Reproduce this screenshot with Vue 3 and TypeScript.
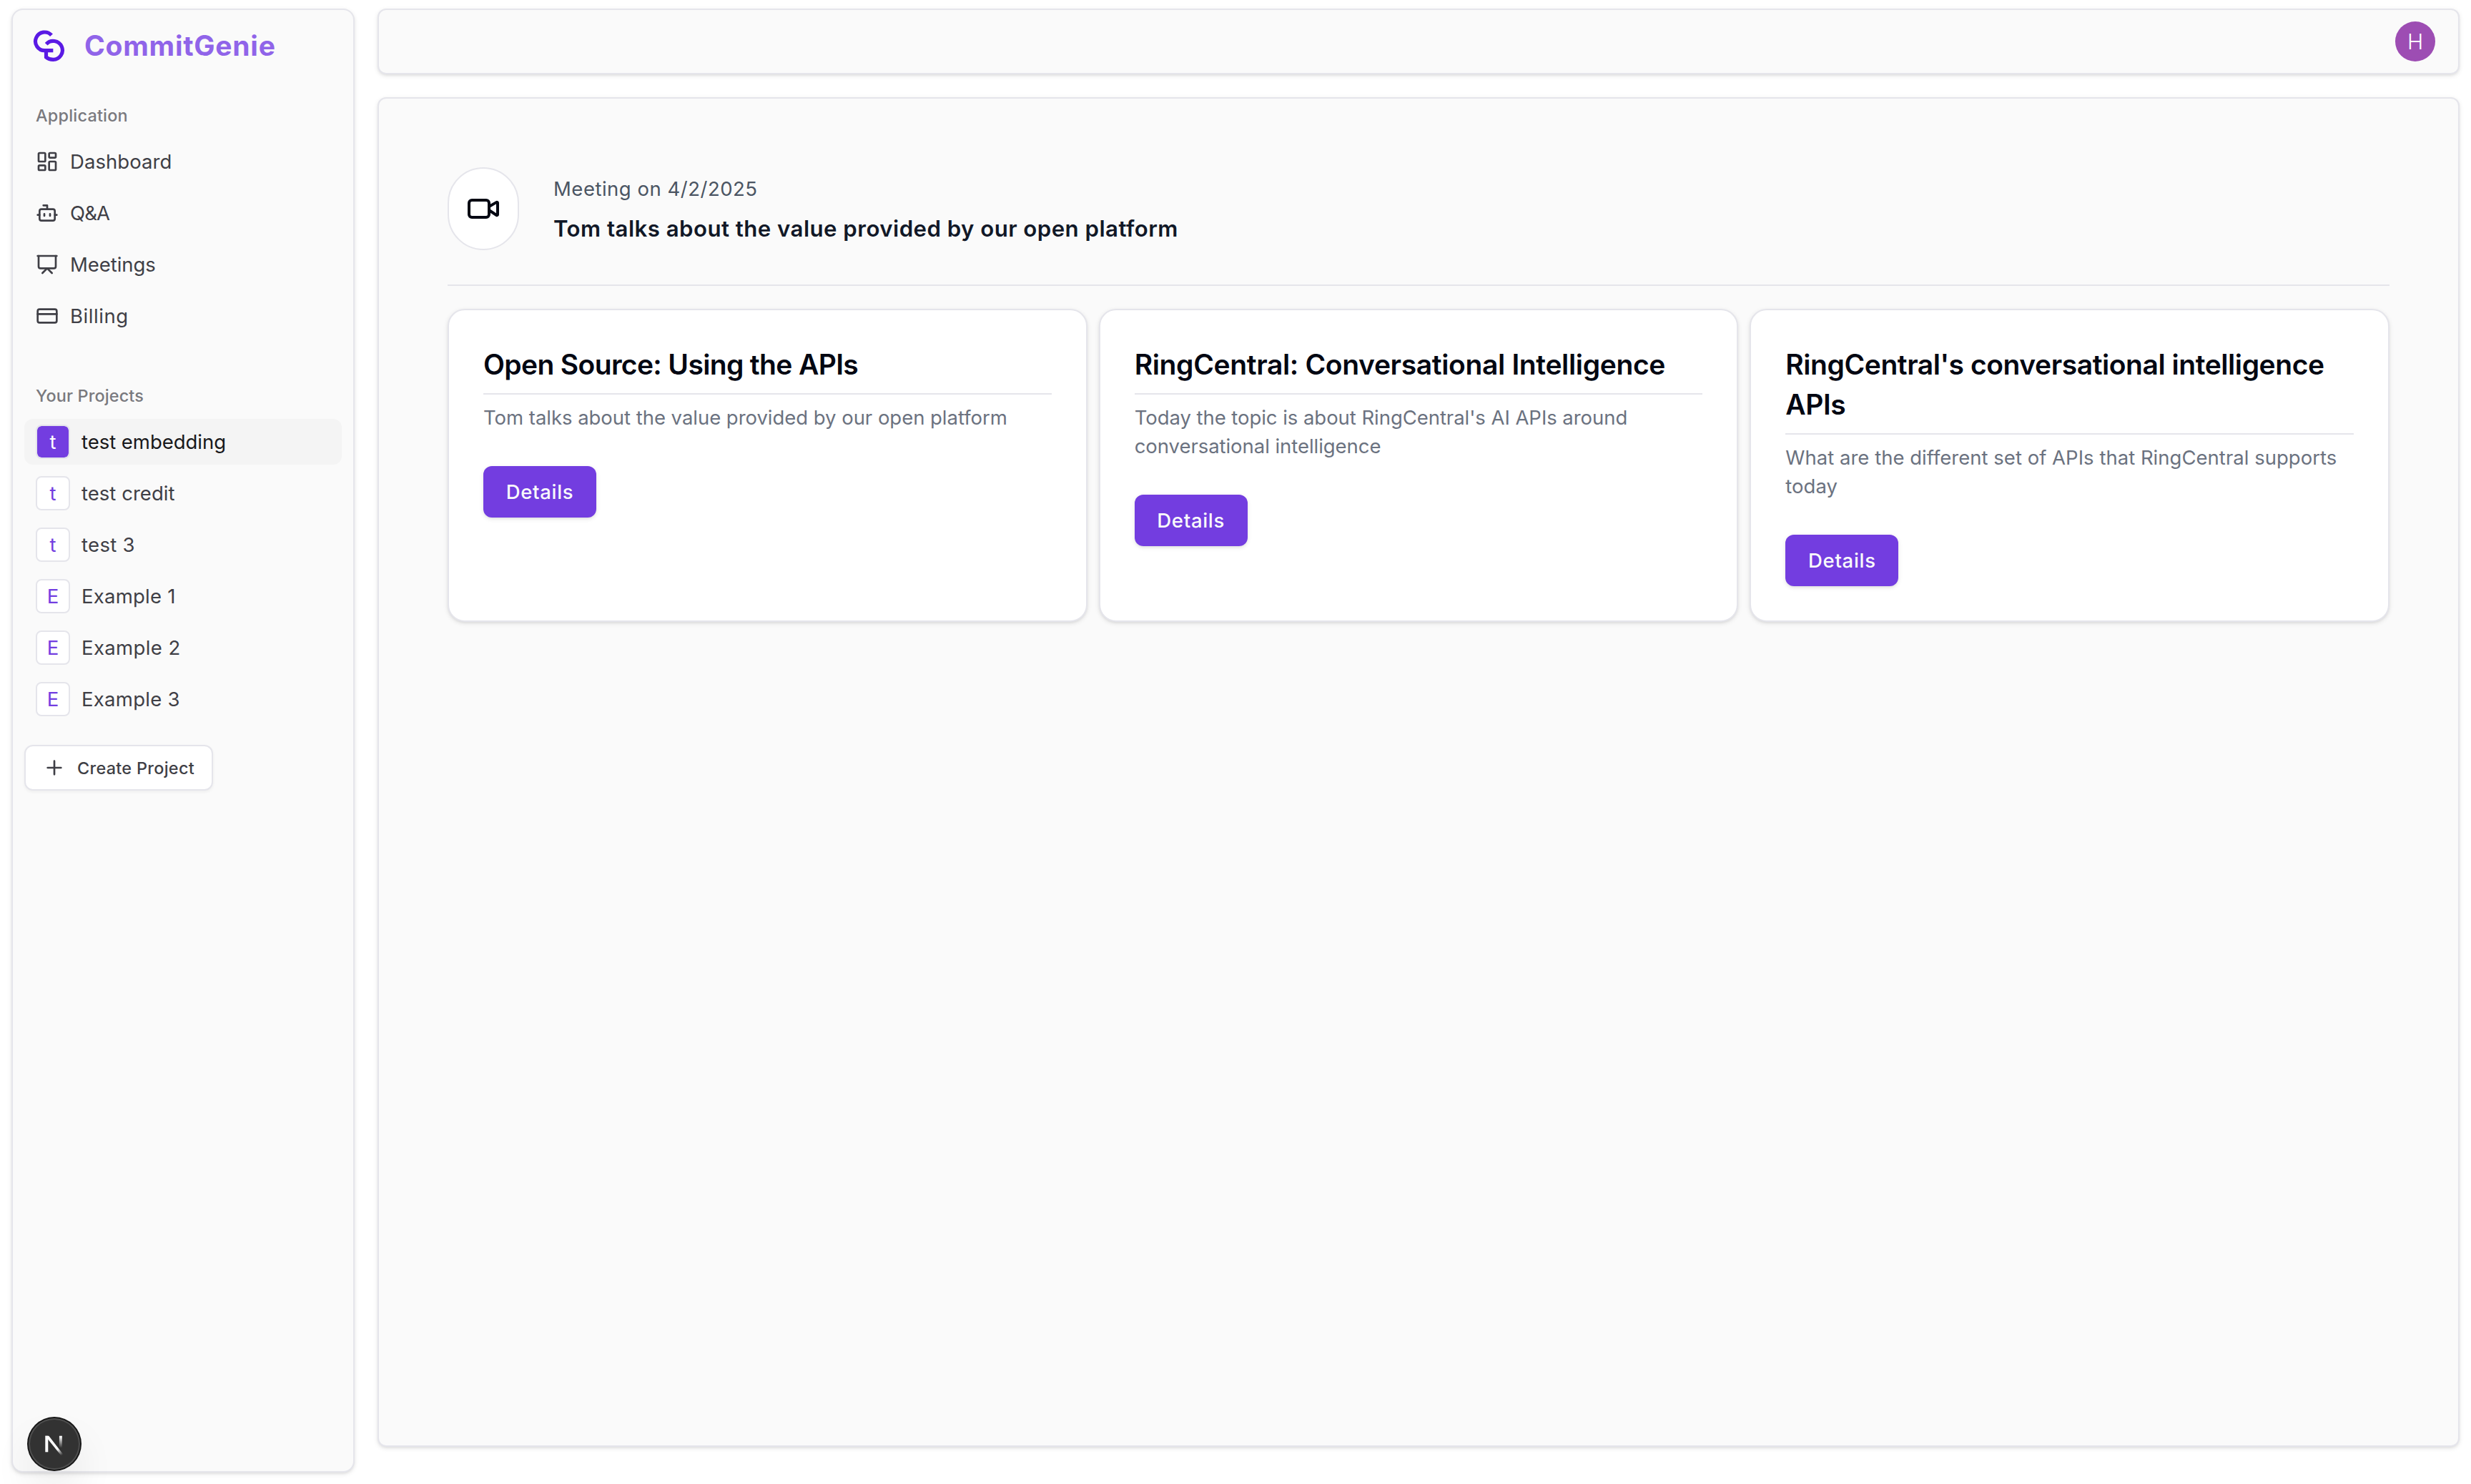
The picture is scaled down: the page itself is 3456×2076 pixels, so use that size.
<script setup lang="ts">
interface Shape {
  tag: 'path' | 'rect' | 'line'
  attrs: Record<string, string | number>
}
interface NavItem {
  label: string
  tracking: number
  shapes: Shape[]
}
interface Project {
  name: string
  tracking: number
}
interface Issue {
  gist: string
  gistTracking: number
  summary: string
  summaryTracking: number
}

const navItems: NavItem[] = [
  {
    label: 'Dashboard',
    tracking: 0.06,
    shapes: [
      { tag: 'rect', attrs: { width: 7, height: 9, x: 3, y: 3, rx: 1 } },
      { tag: 'rect', attrs: { width: 7, height: 5, x: 14, y: 3, rx: 1 } },
      { tag: 'rect', attrs: { width: 7, height: 9, x: 14, y: 12, rx: 1 } },
      { tag: 'rect', attrs: { width: 7, height: 5, x: 3, y: 16, rx: 1 } },
    ],
  },
  {
    label: 'Q&A',
    tracking: -0.85,
    shapes: [
      { tag: 'path', attrs: { d: 'M12 8V4H8' } },
      { tag: 'rect', attrs: { width: 16, height: 12, x: 4, y: 8, rx: 2 } },
      { tag: 'path', attrs: { d: 'M2 14h2M20 14h2M15 13v2M9 13v2' } },
    ],
  },
  {
    label: 'Meetings',
    tracking: -0.05,
    shapes: [
      { tag: 'path', attrs: { d: 'M2 3h20' } },
      { tag: 'path', attrs: { d: 'M21 3v11a2 2 0 0 1-2 2H5a2 2 0 0 1-2-2V3' } },
      { tag: 'path', attrs: { d: 'm7 21 5-5 5 5' } },
    ],
  },
  {
    label: 'Billing',
    tracking: 0.55,
    shapes: [
      { tag: 'rect', attrs: { width: 20, height: 14, x: 2, y: 5, rx: 2 } },
      { tag: 'line', attrs: { x1: 2, x2: 22, y1: 10, y2: 10 } },
    ],
  },
]

const projects: Project[] = [
  { name: 'test embedding', tracking: -0.03 },
  { name: 'test credit', tracking: 0.03 },
  { name: 'test 3', tracking: 0.32 },
  { name: 'Example 1', tracking: 0.24 },
  { name: 'Example 2', tracking: 0.38 },
  { name: 'Example 3', tracking: 0.28 },
]
const activeProject = 'test embedding'

const issues: Issue[] = [
  {
    gist: 'Open Source: Using the APIs',
    gistTracking: -0.645,
    summary: 'Tom talks about the value provided by our open platform',
    summaryTracking: -0.034,
  },
  {
    gist: 'RingCentral: Conversational Intelligence',
    gistTracking: -0.35,
    summary: "Today the topic is about RingCentral's AI APIs around conversational intelligence",
    summaryTracking: -0.05,
  },
  {
    gist: "RingCentral's conversational intelligence APIs",
    gistTracking: -0.44,
    summary: 'What are the different set of APIs that RingCentral supports today',
    summaryTracking: 0.018,
  },
]
</script>

<template>
  <div class="app">
    <aside class="sidebar">
      <header class="brand">
        <svg class="logo" viewBox="137 125 135 135" fill="none" stroke="currentColor" stroke-width="15.5">
          <path d="M215 147A38.5 38.5 0 1 0 187 211H222" />
          <path d="M193 184A39 39 0 1 1 222 249Q204 249 192.500 239V211" />
        </svg>
        <span class="brand-name">CommitGenie</span>
      </header>

      <section class="group">
        <h2 class="group-label">Application</h2>
        <ul class="menu">
          <li v-for="item in navItems" :key="item.label" class="menu-item">
            <svg class="icon" viewBox="0 0 24 24">
              <component :is="s.tag" v-for="(s, i) in item.shapes" :key="i" v-bind="s.attrs" />
            </svg>
            <span :style="{ letterSpacing: item.tracking + 'px' }">{{ item.label }}</span>
          </li>
        </ul>
      </section>

      <section class="group projects">
        <h2 class="group-label projects-label">Your Projects</h2>
        <ul class="menu">
          <li
            v-for="p in projects"
            :key="p.name"
            class="menu-item"
            :class="{ active: p.name === activeProject }"
          >
            <span class="initial">{{ p.name[0] }}</span>
            <span :style="{ letterSpacing: p.tracking + 'px' }">{{ p.name }}</span>
          </li>
        </ul>
        <button class="create">
          <svg class="icon" viewBox="0 0 24 24"><path d="M5 12h14M12 5v14" /></svg>
          Create Project
        </button>
      </section>
    </aside>

    <main class="main">
      <div class="topbar">
        <span class="avatar">H</span>
      </div>

      <div class="panel">
        <div class="meeting">
          <div class="meeting-icon">
            <svg class="icon video" viewBox="0 0 24 24">
              <path d="m16 13 5.223 3.482a.5.5 0 0 0 .777-.416V7.870a.5.5 0 0 0-.752-.432L16 10.500" />
              <rect x="2" y="6" width="14" height="12" rx="2" />
            </svg>
          </div>
          <div class="meeting-text">
            <div class="meeting-date">Meeting on 4/2/2025</div>
            <h1 class="meeting-name">Tom talks about the value provided by our open platform</h1>
          </div>
        </div>

        <div class="cards">
          <article v-for="issue in issues" :key="issue.gist" class="card">
            <h3 class="card-title" :style="{ letterSpacing: issue.gistTracking + 'px' }">{{ issue.gist }}</h3>
            <p class="card-text" :style="{ letterSpacing: issue.summaryTracking + 'px' }">{{ issue.summary }}</p>
            <button class="details">Details</button>
          </article>
        </div>
      </div>
    </main>

    <div class="dev-badge">
      <svg class="dev-mark" viewBox="0 0 40 40" fill="none">
        <defs>
          <linearGradient id="diag" x1="22" y1="23" x2="31" y2="35.5" gradientUnits="userSpaceOnUse">
            <stop stop-color="#fff" />
            <stop offset="0.3" stop-color="#fff" />
            <stop offset="1" stop-color="#fff" stop-opacity="0" />
          </linearGradient>
          <linearGradient id="stem" x1="0" y1="9" x2="0" y2="25.5" gradientUnits="userSpaceOnUse">
            <stop stop-color="#fff" />
            <stop offset="1" stop-color="#fff" stop-opacity="0" />
          </linearGradient>
        </defs>
        <path d="M9.300 31.300V8.700" stroke="#fff" stroke-width="4" />
        <path d="M7.300 8.700H12.300L32.300 34.500L29.700 36.500L7.300 8.700Z" fill="url(#diag)" />
        <path d="M28.900 8.700V26" stroke="url(#stem)" stroke-width="4" />
      </svg>
    </div>
  </div>
</template>

<style>
body {
  margin: 0;
  background: #fff;
}
</style>

<style scoped>
.app {
  box-sizing: border-box;
  display: flex;
  gap: 32px;
  height: 2076px;
  padding: 12px 16px 16px;
  font-family: Inter, 'Liberation Sans', sans-serif;
  color: #030712;
}
.app * {
  box-sizing: border-box;
}
h1,
h2,
h3,
p,
ul {
  margin: 0;
  padding: 0;
}
ul {
  list-style: none;
}
button {
  font-family: inherit;
}

.sidebar,
.topbar,
.panel {
  border: 2px solid #e5e5eb;
  background: #fafafa;
  box-shadow: 0 2px 6px rgba(0, 0, 0, 0.1), 0 2px 4px -2px rgba(0, 0, 0, 0.1);
}

/* Sidebar */
.sidebar {
  flex: none;
  width: 480px;
  border-radius: 16px;
  color: #3f3f46;
}
.brand {
  display: flex;
  align-items: center;
  height: 100px;
  padding-left: 28px;
}
.logo {
  width: 45px;
  height: 45px;
  color: #5a1ae4;
}
.brand-name {
  margin-left: 27px;
  font-size: 39px;
  font-weight: 700;
  line-height: 56px;
  letter-spacing: 0.75px;
  color: #9064e9;
}
.group {
  padding: 16px;
}
.group.projects {
  padding-top: 32px;
}
.group-label {
  height: 64px;
  padding-left: 16px;
  font-size: 23.400px;
  font-weight: 500;
  line-height: 64px;
  letter-spacing: 0.23px;
  color: #79797e;
}
.projects-label {
  letter-spacing: 0.16px;
}
.menu {
  display: flex;
  flex-direction: column;
  gap: 8px;
}
.menu-item {
  display: flex;
  align-items: center;
  gap: 16px;
  height: 64px;
  padding: 0 16px;
  border-radius: 12px;
  font-size: 27.500px;
  line-height: 40px;
}
.menu-item.active {
  background: #f4f4f4;
  color: #18181b;
}
.icon {
  flex: none;
  width: 32px;
  height: 32px;
  fill: none;
  stroke: currentColor;
  stroke-width: 2;
  stroke-linecap: round;
  stroke-linejoin: round;
}
.initial {
  display: flex;
  align-items: center;
  justify-content: center;
  width: 48px;
  height: 48px;
  border: 2px solid #e5e5eb;
  border-radius: 8px;
  background: #fff;
  color: #733de0;
}
.active .initial {
  background: #733de0;
  background-clip: padding-box;
  color: #fff;
}
.create {
  display: flex;
  align-items: center;
  gap: 16px;
  width: 264px;
  height: 64px;
  margin-top: 32px;
  padding: 0 24px;
  border: 2px solid #e5e5eb;
  border-radius: 12px;
  background: #fff;
  box-shadow: 0 2px 4px rgba(0, 0, 0, 0.05);
  font-size: 23.400px;
  font-weight: 500;
  letter-spacing: 0.32px;
  white-space: nowrap;
  color: #3f3f46;
}

/* Main column */
.main {
  flex: 1;
  display: flex;
  flex-direction: column;
  gap: 32px;
  min-width: 0;
}
.topbar {
  display: flex;
  align-items: flex-start;
  justify-content: flex-end;
  height: 92px;
  padding: 16px 32px;
  border-radius: 12px;
}
.avatar {
  width: 56px;
  height: 56px;
  border-radius: 50%;
  background: #9d4db3;
  color: #fff;
  font-size: 30px;
  font-weight: 300;
  line-height: 56px;
  text-align: center;
}
.panel {
  height: 1888px;
  padding: 96px;
  border-radius: 12px;
}
.meeting {
  display: flex;
  align-items: center;
  gap: 48px;
  padding-bottom: 48px;
  border-bottom: 2px solid #e5e5eb;
}
.meeting-icon {
  display: flex;
  align-items: center;
  justify-content: center;
  width: 100px;
  height: 116px;
  border: 2px solid #e5e5eb;
  border-radius: 50px;
  background: #fff;
}
.icon.video {
  width: 48px;
  height: 48px;
}
.meeting-date {
  font-size: 27.500px;
  line-height: 48px;
  letter-spacing: 0.510px;
  color: #4b5563;
}
.meeting-name {
  margin-top: 8px;
  font-size: 31.200px;
  font-weight: 600;
  line-height: 48px;
  letter-spacing: 0.460px;
  color: #111827;
}

/* Issue cards */
.cards {
  display: grid;
  grid-template-columns: repeat(3, minmax(0, 1fr));
  gap: 16px;
  margin-top: 32px;
}
.card {
  padding: 48px;
  border: 2px solid #e5e5eb;
  border-radius: 24px;
  background: #fff;
  box-shadow: 0 2px 6px rgba(0, 0, 0, 0.1), 0 2px 4px -2px rgba(0, 0, 0, 0.1);
}
.card-title {
  padding-bottom: 12px;
  border-bottom: 2px solid #e5e5eb;
  font-size: 39px;
  font-weight: 600;
  line-height: 56px;
}
.card-text {
  margin-top: 12px;
  font-size: 27.500px;
  line-height: 40px;
  color: #6b7280;
}
.details {
  display: block;
  width: 158px;
  height: 72px;
  margin-top: 48px;
  padding: 0;
  border: 0;
  border-radius: 12px;
  background: #733de0;
  box-shadow: 0 2px 6px rgba(0, 0, 0, 0.1), 0 2px 4px -2px rgba(0, 0, 0, 0.1);
  color: #f9fafb;
  font-size: 27.500px;
  font-weight: 500;
  letter-spacing: 0.7px;
}

/* Floating dev indicator */
.dev-badge {
  position: fixed;
  left: 40px;
  bottom: 20px;
  display: flex;
  align-items: center;
  justify-content: center;
  width: 72px;
  height: 72px;
  border-radius: 50%;
  background: #323232;
  box-shadow: 0 0 0 2px #171717, inset 0 0 0 2px rgba(255, 255, 255, 0.14), 0 32px 64px -16px rgba(0, 0, 0, 0.24);
}
.dev-mark {
  width: 40px;
  height: 40px;
}
</style>
